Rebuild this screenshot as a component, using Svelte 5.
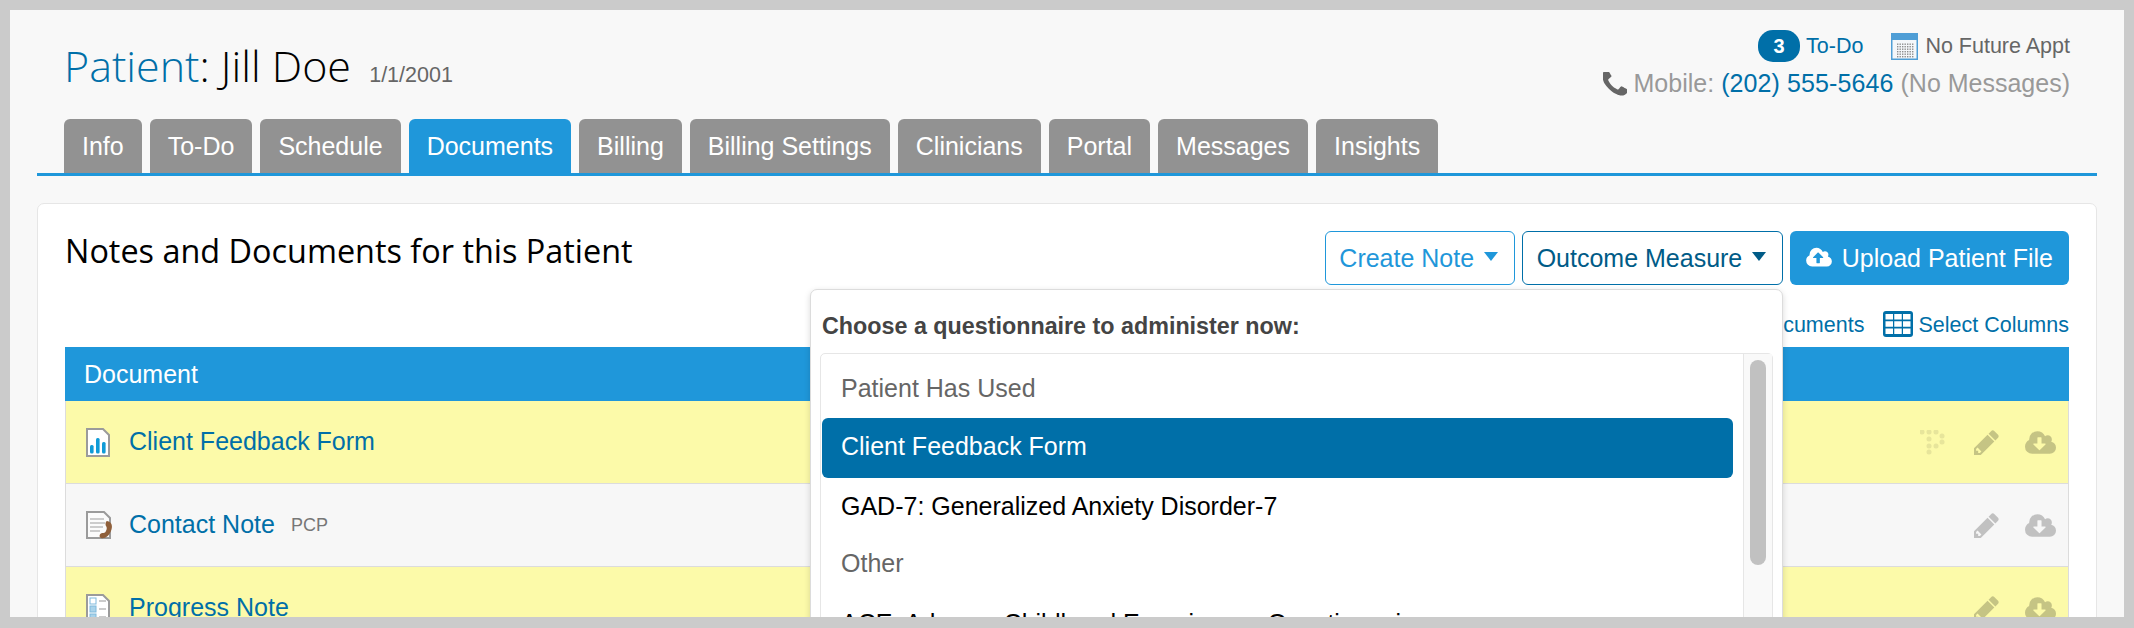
<script>
	const tabs = ['Info', 'To-Do', 'Schedule', 'Documents', 'Billing', 'Billing Settings', 'Clinicians', 'Portal', 'Messages', 'Insights'];
	const cloudDown = 'M1280 928q0-14-9-23t-23-9h-224v-352q0-13-9.5-22.5t-22.5-9.5h-192q-13 0-22.5 9.5t-9.5 22.5v352h-224q-13 0-22.5 9.5t-9.5 22.5q0 14 9 23l352 352q9 9 23 9t23-9l351-351q10-12 10-24zm640 224q0 159-112.5 271.5t-271.5 112.5h-1088q-185 0-316.5-131.5t-131.5-316.5q0-130 70-240t188-165q-2-30-2-43 0-212 150-362t362-150q156 0 285.5 87t188.5 231q71-62 166-62 106 0 181 75t75 181q0 76-41 138 130 31 213.5 135.5t83.5 238.5z';
	const cloudUp = 'M1280 864q0-14-9-23l-352-352q-9-9-23-9t-23 9l-351 351q-10 12-10 24 0 14 9 23t23 9h224v352q0 13 9.5 22.5t22.5 9.5h192q13 0 22.5-9.5t9.5-22.5v-352h224q13 0 22.5-9.5t9.5-22.5zm640 288q0 159-112.5 271.5t-271.5 112.5h-1088q-185 0-316.5-131.5t-131.5-316.5q0-130 70-240t188-165q-2-30-2-43 0-212 150-362t362-150q156 0 285.5 87t188.5 231q71-62 166-62 106 0 181 75t75 181q0 76-41 138 130 31 213.5 135.5t83.5 238.5z';
	const pencil = 'M491 1536l91-91-235-235-91 91v107h128v128h107zm469-1120l416 416-832 832h-416v-416zm683 96q0 53-37 90l-166 166-416-416 166-165q36-38 90-38 53 0 91 38l235 234q37 39 37 91z';
	const phone = 'M1600 1240q0 27-10 70.5t-21 68.5q-21 50-122 106-94 51-186 51-27 0-53-3.5t-57.5-12.5-47-14.5-55.5-20.5-49-18q-98-35-175-83-127-79-264-216t-216-264q-48-77-83-175-3-9-18-49t-20.5-55.5-14.5-47-12.5-57.5-3.5-53q0-92 51-186 56-101 106-122 25-11 68.5-21t70.5-10q14 0 21 3 18 6 53 76 11 19 30 54t35 63.5 31 53.5q3 4 17.5 25t21.5 35.5 7 28.5q0 20-28.5 50t-62 55-62 53-28.5 46q0 9 5 22.5t8.5 20.5 14 24 11.5 19q76 137 174 235t235 174q2 1 19 11.5t24 14 20.5 8.5 22.5 5q18 0 46-28.5t53-62 55-62 50-28.5q14 0 28.5 7t35.5 21.5 25 17.5q25 15 53.5 31t63.5 35 54 30q70 35 76 53 3 7 3 21z';
	const calDots = [];
	for (let y = 0; y < 6; y++) for (let x = 0; x < 7; x++) calDots.push([6 + x * 2.5, 10.5 + y * 2.5]);
	const dots = [[2,2],[9,2],[16,2],[22,6],[22,12],[16,16],[9,9],[9,16],[9,22]];
</script>

<div class="shell">
	<header class="top">
		<h1><span class="blue">Patient</span>: Jill Doe <small>1/1/2001</small></h1>
		<div class="info">
			<div class="line1">
				<span class="count">3</span>
				<a href="#todo" class="todo">To-Do</a>
				<svg class="cal" width="27" height="27" viewBox="0 0 27 27">
					<rect width="27" height="27" fill="#4f9ed6"/>
					<rect x="1.5" y="7" width="24" height="18.5" fill="#f4f7fa"/>
					{#each calDots as d}<rect x={d[0]} y={d[1]} width="1.4" height="1.4" fill="#8d8d8d"/>{/each}
				</svg>
				<span>No Future Appt</span>
			</div>
			<div class="line2">
				<svg width="24" height="24" viewBox="240 240 1320 1320"><path d={phone} fill="#666"/></svg>
				<span>Mobile:</span>
				<a href="#call">(202) 555-5646</a>
				<span>(No Messages)</span>
			</div>
		</div>
	</header>

	<nav class="tabs">
		{#each tabs as t}
			<a href="#tab" class:on={t === 'Documents'}>{t}</a>
		{/each}
	</nav>

	<section class="card">
		<div class="head">
			<h2>Notes and Documents for this Patient</h2>
			<div class="actions">
				<button class="outline">Create Note<i></i></button>
				<button class="outline dark">Outcome Measure<i></i></button>
				<button class="solid">
					<svg width="26" height="24" viewBox="0 0 1920 1792"><path d={cloudUp} fill="#fff" fill-rule="evenodd"/></svg>
					Upload Patient File
				</button>
			</div>
		</div>

		<div class="tools">
			<a href="#docs"><span>Documents</span></a>
			<a href="#cols" class="cols">
				<svg width="30" height="26" viewBox="0 0 30 26">
					<rect width="30" height="26" rx="3" fill="#006fa8"/>
					{#each [2.5, 11.25, 20] as x}
						{#each [3, 10.25, 17.5] as y}
							<rect {x} {y} width="7.5" height="5.5" fill="#fff"/>
						{/each}
					{/each}
				</svg>
				<span>Select Columns</span>
			</a>
		</div>

		<div class="table">
			<div class="thead">Document</div>
			<div class="row yellow">
				<span class="ico">
					<svg width="24" height="29" viewBox="0 0 24 29">
						<path d="M1 1h16l6 6v21H1z" fill="#fff" stroke="#9b9b9b" stroke-width="2"/>
						<rect x="4" y="17" width="3.6" height="8.5" rx="1.5" fill="#0f9bd7"/>
						<rect x="10" y="10" width="3.6" height="15.5" rx="1.5" fill="#0f9bd7"/>
						<rect x="16" y="14" width="3.6" height="11.5" rx="1.5" fill="#0f9bd7"/>
					</svg>
				</span>
				<a href="#doc">Client Feedback Form</a>
				<div class="acts">
					<svg class="logo" width="25" height="25" viewBox="0 0 25 25">
						{#each dots as d}<circle cx={d[0]} cy={d[1]} r="2.5" fill="#000"/>{/each}
					</svg>
					<svg class="act" width="25" height="25" viewBox="128 128 1536 1536"><path d={pencil}/></svg>
					<svg class="act" width="31" height="23" viewBox="0 128 1920 1408"><path d={cloudDown} fill-rule="evenodd"/></svg>
				</div>
			</div>
			<div class="row">
				<span class="ico">
					<svg width="27" height="28" viewBox="0 0 27 28">
						<path d="M1 1h17l6 6v20H1z" fill="#fbfbfb" stroke="#9b9b9b" stroke-width="2"/>
						<path d="M4 8h14M4 12h15M4 16h13M4 20h10" stroke="#bdbdbd" stroke-width="1.6"/>
						<path d="M21 10c5 1 6 5 4 10-2 5-6 8-10 7-2-1-2-4 1-5 2 0 3 0 4-2 1-2 1-4 0-5-1-2 0-5 1-5z" fill="#8f5f3a"/>
					</svg>
				</span>
				<a href="#doc">Contact Note</a>
				<small>PCP</small>
				<div class="acts">
					<svg class="act" width="25" height="25" viewBox="128 128 1536 1536"><path d={pencil}/></svg>
					<svg class="act" width="31" height="23" viewBox="0 128 1920 1408"><path d={cloudDown} fill-rule="evenodd"/></svg>
				</div>
			</div>
			<div class="row yellow">
				<span class="ico">
					<svg width="24" height="29" viewBox="0 0 24 29">
						<path d="M1 1h16l6 6v21H1z" fill="#fff" stroke="#9b9b9b" stroke-width="2"/>
						<rect x="4" y="4" width="6" height="6" fill="#fff" stroke="#7fb9dc"/>
						<rect x="4" y="12" width="6" height="6" fill="#a9d3ea" stroke="#7fb9dc"/>
						<rect x="4" y="20" width="6" height="6" fill="#a9d3ea" stroke="#7fb9dc"/>
						<path d="M13 7h7M13 15h7M13 23h7" stroke="#bbb" stroke-width="1.5"/>
					</svg>
				</span>
				<a href="#doc">Progress Note</a>
				<div class="acts">
					<svg class="act" width="25" height="25" viewBox="128 128 1536 1536"><path d={pencil}/></svg>
					<svg class="act" width="31" height="23" viewBox="0 128 1920 1408"><path d={cloudDown} fill-rule="evenodd"/></svg>
				</div>
			</div>
		</div>

		<div class="menu">
			<h3>Choose a questionnaire to administer now:</h3>
			<div class="list">
				<div class="opts">
					<div class="group">Patient Has Used</div>
					<div class="opt sel">Client Feedback Form</div>
					<div class="opt">GAD-7: Generalized Anxiety Disorder-7</div>
					<div class="group other">Other</div>
					<div class="opt">ACE: Adverse Childhood Experiences Questionnaire</div>
				</div>
				<div class="scroll"><span></span></div>
			</div>
		</div>
	</section>
</div>

<style>
	:global(body) { margin: 0; font-family: "Liberation Sans", Arial, sans-serif; }
	a { text-decoration: none; color: #006fa8; }

	.shell {
		box-sizing: border-box; width: 2134px; height: 628px; overflow: hidden;
		border: 10px solid #cbcbcb; border-bottom-width: 11px;
		background: #f8f8f8; padding: 0 27px;
	}

	.top { display: flex; justify-content: space-between; height: 109px; padding: 0 27px 0 27px; box-sizing: border-box; }
	h1 { margin: 0; padding-top: 28px; font: 300 43px/56px "Open Sans", sans-serif; color: #000; }
	h1 .blue { color: #006fa8; }
	h1 small { font: 21.5px "Liberation Sans", sans-serif; color: #666; margin-left: 7px; }

	.info { display: flex; flex-direction: column; align-items: flex-end; padding-top: 20px; }
	.line1 { display: flex; align-items: center; height: 32px; font-size: 21.5px; color: #666; }
	.count {
		display: block; width: 42px; height: 32px; line-height: 32px; text-align: center;
		background: #006fa8; color: #fff; border-radius: 15px; font-size: 20px; font-weight: bold;
	}
	.todo { margin-left: 6px; }
	.cal { margin: 0 7px 0 28px; }
	.line2 { display: flex; align-items: center; gap: 7px; margin-top: 7px; font-size: 25px; line-height: 29px; color: #999; }
	.line2 a { letter-spacing: 0.1px; }

	.tabs { display: flex; gap: 8px; padding-left: 27px; height: 54px; border-bottom: 3px solid #1f97da; }
	.tabs a {
		padding: 0 18px; font-size: 25px; line-height: 54px; color: #fff;
		background: #929292; border-radius: 6px 6px 0 0;
	}
	.tabs a.on { background: #1f97da; }

	.card {
		position: relative; margin-top: 27px; height: 500px; box-sizing: border-box;
		background: #fff; border: 1px solid #e6e6e6; border-radius: 7px; padding: 27px 27px 0;
	}
	.head { display: flex; justify-content: space-between; }
	h2 { margin: 0; font: 400 32.4px/38px "Open Sans", sans-serif; color: #000; }
	.actions { display: flex; gap: 7.5px; }
	button {
		display: flex; align-items: center; height: 54px; padding: 0 15.5px 0 13.5px; font: 25px "Liberation Sans", sans-serif;
		border-radius: 6px; background: #fff; box-sizing: border-box;
	}
	.outline { border: 1px solid #1f97da; color: #1f97da; }
	.outline i { margin: -3px 0 0 10px; border: solid transparent; border-width: 9px 7.5px 0; border-top-color: currentColor; }
	.outline.dark { border-color: #006fa8; color: #005b87; }
	.solid { background: #1f97da; border: 0; color: #fff; gap: 9.5px; padding: 0 16px; }

	.tools { display: flex; justify-content: flex-end; align-items: center; gap: 19px; height: 27px; margin: 25px 0 10px; font-size: 21.5px; }
	.tools span { display: block; padding-top: 3px; }
	.cols { display: flex; align-items: center; gap: 5px; }

	.thead { height: 54px; line-height: 55px; padding-left: 19px; background: #1f97da; color: #fff; font-size: 25px; }
	.row {
		display: flex; align-items: center; box-sizing: border-box; height: 83px; padding-left: 20px;
		background: #f7f7f7; border: 1px solid #dcdcdc; border-width: 0 1px 1px;
		font-size: 25px;
	}
	.row.yellow { background: #fcfaa9; }
	.row a { margin-top: -1px; }
	.ico { display: flex; flex: none; width: 43px; }
	.row small { font-size: 18px; color: #777; margin-left: 16px; }
	.acts { margin-left: auto; display: flex; align-items: center; gap: 26px; padding-right: 12px; }
	.act { fill: #000; opacity: 0.21; }
	.logo { opacity: 0.08; margin-right: 3px; }

	.menu {
		position: absolute; left: 772px; top: 85px; width: 973px; height: 420px; box-sizing: border-box;
		background: #fff; border: 1px solid #dcdcdc; border-radius: 7px; padding: 0 9px;
		box-shadow: 0 2px 6px rgba(0, 0, 0, 0.15);
	}
	h3 { margin: 0; padding: 5px 2px 0; height: 58px; font: bold 23.3px/63px "Liberation Sans", sans-serif; color: #444; }
	.list { display: flex; height: 300px; border: 1px solid #e6e6e6; border-radius: 5px; }
	.opts { flex: 1; padding: 4px 10px 0 1px; font-size: 25px; }
	.opts div { padding-left: 19px; }
	.group { height: 60px; line-height: 60px; color: #666; }
	.group.other { height: 57px; line-height: 50px; }
	.opt { height: 60px; line-height: 57px; color: #000; }
	.opt.sel { background: #006fa8; color: #fff; border-radius: 6px; }
	.scroll { width: 29px; box-sizing: border-box; background: #f9f9f9; border-left: 1px solid #e6e6e6; padding: 6px 6px 0 6px; }
	.scroll span { display: block; width: 16px; height: 205px; border-radius: 8px; background: #c1c1c1; }
</style>
